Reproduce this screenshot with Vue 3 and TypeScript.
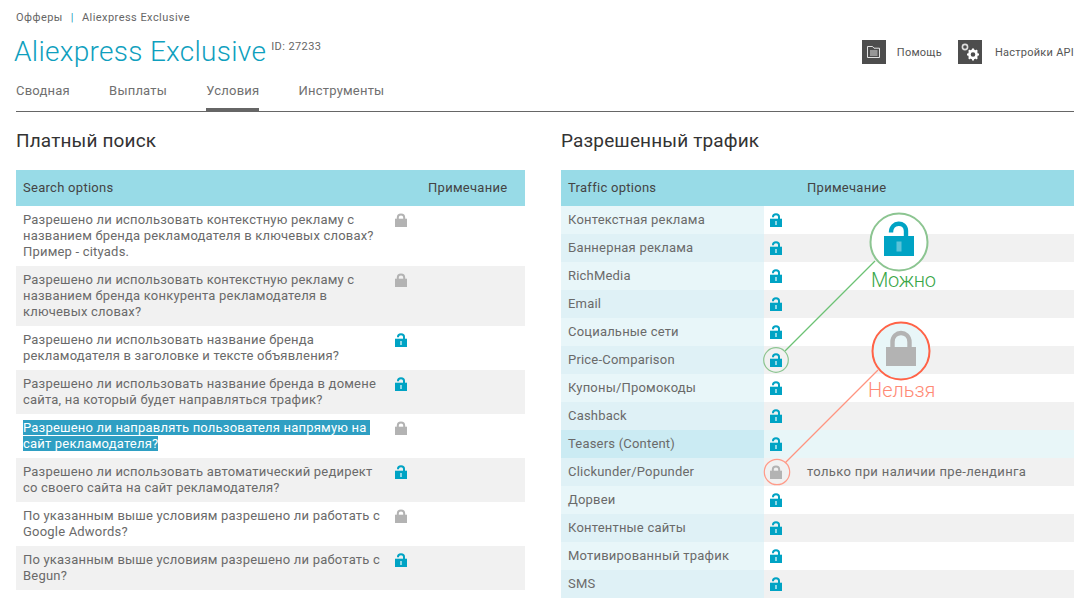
<script setup lang="ts">
interface SearchRow { lines: string; open: boolean; selected?: boolean }
interface TrafficRow { name: string; open: boolean; note?: string; hl?: boolean }

const searchRows: SearchRow[] = [
  { lines: 'Разрешено ли использовать контекстную рекламу с\nназванием бренда рекламодателя в ключевых словах?\nПример - cityads.', open: false },
  { lines: 'Разрешено ли использовать контекстную рекламу с\nназванием бренда конкурента рекламодателя в\nключевых словах?', open: false },
  { lines: 'Разрешено ли использовать название бренда\nрекламодателя в заголовке и тексте объявления?', open: true },
  { lines: 'Разрешено ли использовать название бренда в домене\nсайта, на который будет направляться трафик?', open: true },
  { lines: 'Разрешено ли направлять пользователя напрямую на \nсайт рекламодателя?', open: false, selected: true },
  { lines: 'Разрешено ли использовать автоматический редирект\nсо своего сайта на сайт рекламодателя?', open: true },
  { lines: 'По указанным выше условиям разрешено ли работать с\nGoogle Adwords?', open: false },
  { lines: 'По указанным выше условиям разрешено ли работать с\nBegun?', open: true },
]

const trafficRows: TrafficRow[] = [
  { name: 'Контекстная реклама', open: true },
  { name: 'Баннерная реклама', open: true },
  { name: 'RichMedia', open: true },
  { name: 'Email', open: true },
  { name: 'Социальные сети', open: true },
  { name: 'Price-Comparison', open: true },
  { name: 'Купоны/Промокоды', open: true },
  { name: 'Cashback', open: true },
  { name: 'Teasers (Content)', open: true, hl: true },
  { name: 'Clickunder/Popunder', open: false, note: 'только при наличии пре-лендинга' },
  { name: 'Дорвеи', open: true },
  { name: 'Контентные сайты', open: true },
  { name: 'Мотивированный трафик', open: true },
  { name: 'SMS', open: true },
]

const tabs = ['Сводная', 'Выплаты', 'Условия', 'Инструменты']
</script>

<template>
  <div class="page">
    <div class="crumbs"><span>Офферы</span><i>|</i><span>Aliexpress Exclusive</span></div>

    <div class="head">
      <div class="title-wrap">
        <h1>Aliexpress Exclusive</h1>
        <span class="id">ID: 27233</span>
      </div>
      <div class="actions">
        <a class="action help">
          <span class="tile">
            <svg width="13" height="12" viewBox="0 0 13 12" fill="none" stroke="#f2f2f2" stroke-width=".9">
              <path d="M.5.5H5.500L7 2.200H12.500V11.500H.5Z" />
              <path d="M3 5H10.500M3 7H10.500M3 9H10.500" />
            </svg>
          </span>
          Помощь
        </a>
        <a class="action">
          <span class="tile">
            <svg width="20" height="20" viewBox="0 0 20 20">
              <circle cx="5" cy="5" r="2.6" fill="none" stroke="#ddd" stroke-width="1.6" />
              <circle cx="13" cy="12.5" r="3.6" fill="none" stroke="#fff" stroke-width="2.6" />
              <path d="M13 6.5V8.5M13 16.5V18.5M7 12.5H9M17 12.5H19M8.8 8.3L10.2 9.7M15.8 15.3L17.2 16.7M8.8 16.7L10.2 15.3M15.8 9.7L17.2 8.3" stroke="#fff" stroke-width="2" />
            </svg>
          </span>
          Настройки API
        </a>
      </div>
    </div>

    <nav class="tabs">
      <a v-for="t in tabs" :key="t" class="tab" :class="{ active: t === 'Условия' }">{{ t }}</a>
    </nav>

    <div class="columns">
      <section class="left">
        <h2>Платный поиск</h2>
        <div class="thead s-grid"><span>Search options</span><span></span><span>Примечание</span></div>
        <div v-for="(r, i) in searchRows" :key="i" class="s-row s-grid" :class="{ alt: i % 2 === 1 }">
          <div class="s-text"><span :class="{ sel: r.selected }">{{ r.lines }}</span></div>
          <div class="s-lock">
            <svg class="lock" viewBox="0 0 12 14" width="12" height="14">
              <template v-if="r.open">
                <path d="M3 4.200V3.800C3 .4 9 .4 9 3.800V6.500" fill="none" stroke="#00a3c4" stroke-width="2" />
                <path d="M0 5.700h12V14H0z" fill="#00a3c4" />
                <path d="M5 8h2v4H5z" fill="#8fd8e6" />
              </template>
              <template v-else>
                <path d="M2.800 6.500V4.500C2.800 .6 9.200 .6 9.200 4.500V6.500" fill="none" stroke="#b3b3b3" stroke-width="2" />
                <path d="M0 5.700h12V14H0z" fill="#b3b3b3" />
              </template>
            </svg>
          </div>
          <div></div>
        </div>
      </section>

      <section class="right">
        <h2>Разрешенный трафик</h2>
        <div class="thead t-grid"><span>Traffic options</span><span></span><span>Примечание</span></div>
        <div v-for="(r, i) in trafficRows" :key="r.name" class="t-row t-grid" :class="{ alt: i % 2 === 1, hl: r.hl }">
          <div class="t-name">{{ r.name }}</div>
          <div class="t-lock">
            <svg class="lock" viewBox="0 0 12 14" width="12" height="14">
              <template v-if="r.open">
                <path d="M3 4.200V3.800C3 .4 9 .4 9 3.800V6.500" fill="none" stroke="#00a3c4" stroke-width="2" />
                <path d="M0 5.700h12V14H0z" fill="#00a3c4" />
                <path d="M5 8h2v4H5z" fill="#8fd8e6" />
              </template>
              <template v-else>
                <path d="M2.800 6.500V4.500C2.800 .6 9.200 .6 9.200 4.500V6.500" fill="none" stroke="#b3b3b3" stroke-width="2" />
                <path d="M0 5.700h12V14H0z" fill="#b3b3b3" />
              </template>
            </svg>
          </div>
          <div class="t-note">{{ r.note }}</div>
        </div>
      </section>
    </div>

    <svg class="overlay" width="1090" height="608" viewBox="0 0 1090 608">
      <path d="M875 261L785 351" fill="none" stroke="#6cc274" stroke-width="1.300" />
      <circle cx="776" cy="360" r="12.300" fill="none" stroke="#8cc591" stroke-width="1.200" />
      <circle cx="899" cy="242" r="28.500" fill="#fff" stroke="#8cc591" stroke-width="2" />
      <path d="M891 232.500C891 221 906 221 906 231V237" fill="none" stroke="#00a3c4" stroke-width="4.400" />
      <path d="M884 236h30v20h-30z" fill="#00a3c4" />
      <path d="M896.500 241.500h5v10h-5z" fill="#5cc3d8" />

      <path d="M878 370L785 463" fill="none" stroke="#ff9480" stroke-width="1.300" />
      <circle cx="777" cy="472" r="12.700" fill="none" stroke="#ff9a88" stroke-width="1.200" />
      <circle cx="901" cy="351" r="28.500" fill="#e8f6f8" stroke="#ff6347" stroke-width="2" />
      <path d="M892.500 347V342C892.500 330 909.500 330 909.500 342V347" fill="none" stroke="#b3b3b3" stroke-width="4.400" />
      <path d="M886 347h30v19h-30z" fill="#b3b3b3" />
    </svg>
    <span class="tag yes">Можно</span>
    <span class="tag no">Нельзя</span>
  </div>
</template>

<style scoped>
.page {
  position: relative;
  width: 1090px;
  height: 608px;
  overflow: hidden;
  box-sizing: border-box;
  padding: 11px 16px 0;
  background: #fff;
  font-family: Roboto, "Noto Sans", sans-serif;
  font-size: 13px;
  color: #6a6a6a;
  letter-spacing: 0.2px;
}
.crumbs {
  display: flex;
  font-size: 11px;
  line-height: 14px;
  color: #666;
  letter-spacing: 0.45px;
}
.crumbs i {
  font-style: normal;
  color: #2c9fbd;
  margin: 0 8px;
}
.head {
  display: flex;
  justify-content: space-between;
  align-items: flex-start;
  margin-top: 9px;
}
.title-wrap {
  display: flex;
  align-items: flex-start;
}
h1 {
  margin: 0 0 0 -2px;
  font-size: 28px;
  line-height: 36px;
  font-weight: 300;
  color: #0f9fbe;
  letter-spacing: 0.3px;
}
.id {
  margin: 6px 0 0 5px;
  font-size: 11px;
  line-height: 14px;
  color: #666;
  letter-spacing: 0.4px;
}
.actions {
  display: flex;
  gap: 16px;
  margin-top: 6px;
  font-size: 11px;
  color: #555;
  letter-spacing: 0.25px;
}
.action {
  display: flex;
  align-items: center;
  gap: 13px;
}
.action.help { gap: 11px; }
.tile {
  display: flex;
  align-items: center;
  justify-content: center;
  width: 24px;
  height: 24px;
  background: #4d4d4d;
}
.tabs {
  display: flex;
  gap: 39.3px;
  margin-top: 6px;
  border-bottom: 1px solid #666;
}
.tab {
  height: 32px;
  line-height: 29px;
  font-size: 13px;
  color: #707070;
  letter-spacing: 0.2px;
  padding-bottom: 3px;
}
.tab.active {
  padding-bottom: 0;
  border-bottom: 3px solid #666;
}
.columns {
  display: flex;
  gap: 36px;
  margin-top: 15px;
}
.left { width: 509px; flex: none; }
.right { width: 513px; flex: none; }
h2 {
  margin: 0 0 16px;
  font-size: 19px;
  line-height: 27px;
  font-weight: 400;
  color: #333;
  letter-spacing: 0.15px;
}
.thead {
  height: 36px;
  box-sizing: border-box;
  padding-bottom: 2px;
  align-items: center;
  background: #98dbe7;
  color: #444;
  letter-spacing: 0.28px;
}
.s-grid {
  display: grid;
  grid-template-columns: 372px 40px 97px;
}
.thead.s-grid span:first-child { padding-left: 7px; }
.s-row { background: #fff; }
.s-row.alt { background: #f1f1f1; }
.s-text {
  padding: 6px 0 6px 7px;
  line-height: 16px;
  white-space: pre;
}
.sel {
  background: #2f9fc3;
  color: #fff;
}
.s-lock { padding: 7px 0 0 7px; }
.lock { display: block; }
.t-grid {
  display: grid;
  grid-template-columns: 203px 43px 267px;
}
.thead.t-grid span:first-child { padding-left: 7px; }
.t-row {
  height: 28px;
  background: #fff;
}
.t-row.alt { background: #f1f1f1; }
.t-row.hl { background: #e8f6f8; }
.t-name {
  padding-left: 7px;
  line-height: 27px;
  background: #e8f6f9;
}
.t-row.alt .t-name { background: #dff1f6; }
.t-row.hl .t-name { background: #cbebf3; }
.t-lock { padding: 7px 0 0 6px; }
.t-note { line-height: 27px; letter-spacing: 0.35px; }
.overlay {
  position: absolute;
  left: 0;
  top: 0;
  pointer-events: none;
}
.tag {
  position: absolute;
  font-size: 20px;
  line-height: 24px;
  font-weight: 300;
  letter-spacing: 0;
}
.yes { left: 871px; top: 268px; color: #38a647; letter-spacing: -0.3px; }
.no { left: 868px; top: 378px; color: #ff8a75; }
</style>
